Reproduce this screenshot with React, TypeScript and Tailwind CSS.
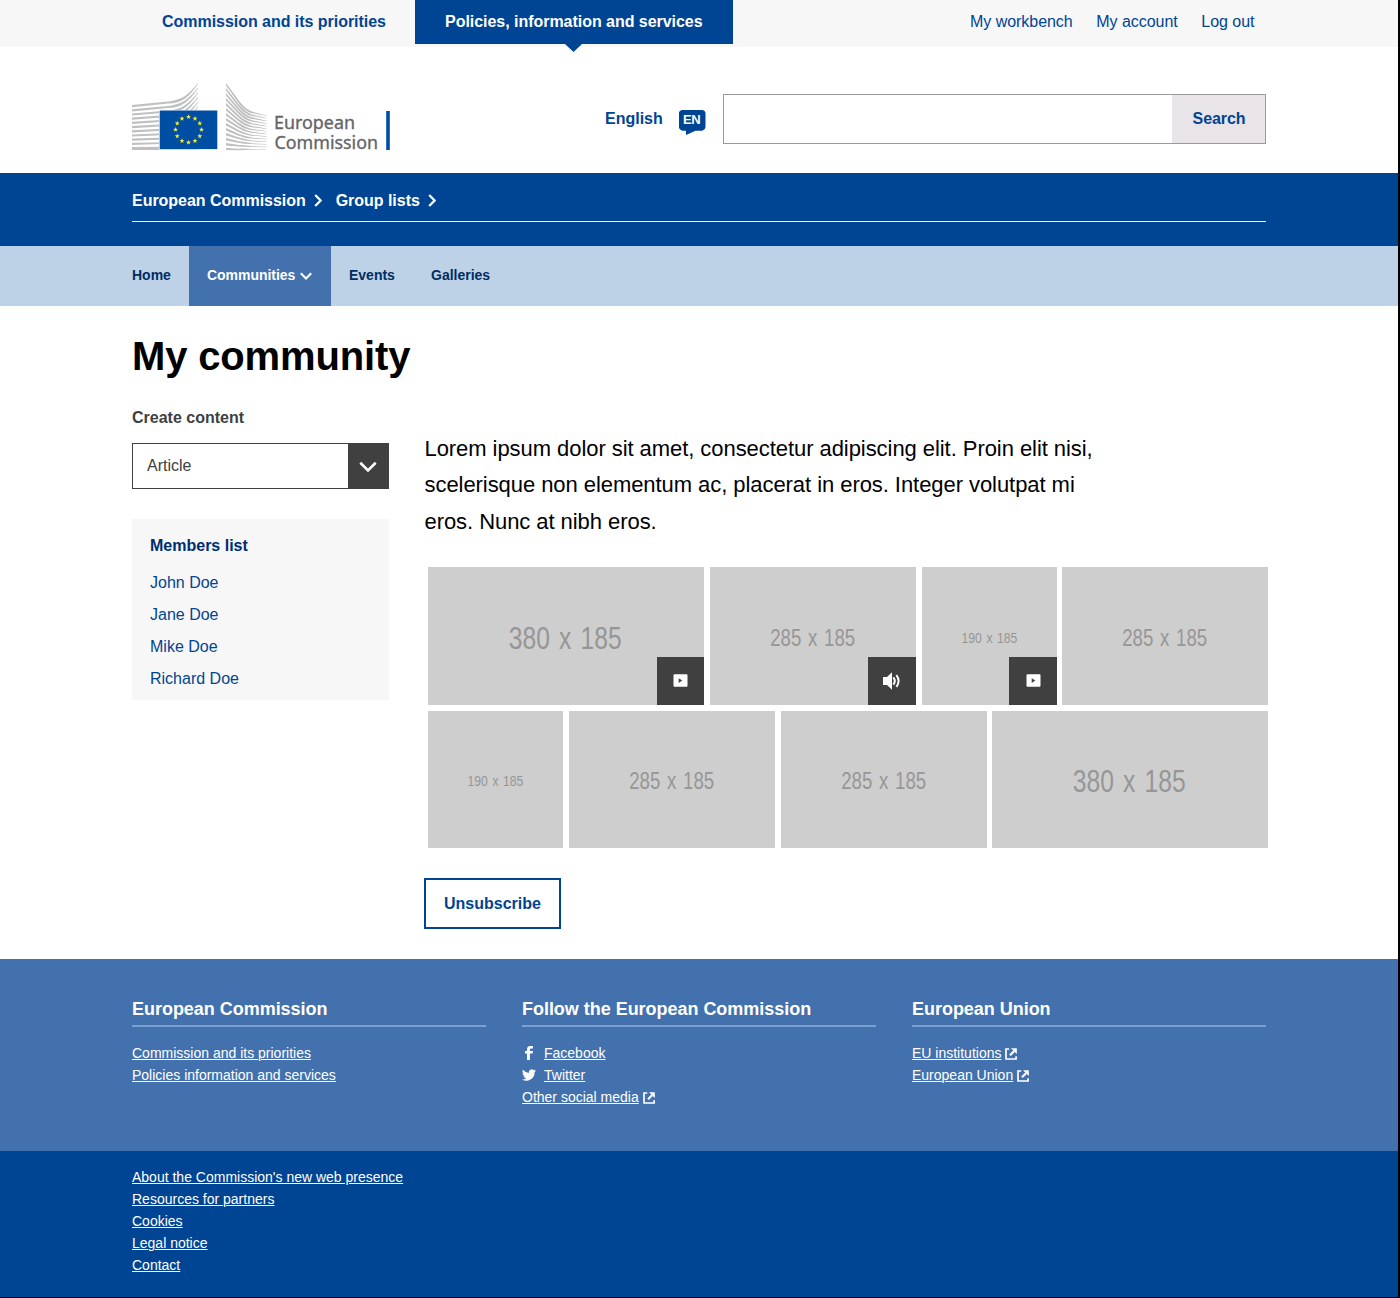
import React from "react";

const starPoints = (cx: number, cy: number, r: number) =>
  Array.from({ length: 10 }, (_, i) => {
    const a = -Math.PI / 2 + (i * Math.PI) / 5;
    const rr = i % 2 ? r * 0.42 : r;
    return `${cx + rr * Math.cos(a)},${cy + rr * Math.sin(a)}`;
  }).join(" ");

function Logo() {
  return (
    <svg width="259" height="68" viewBox="0 0 259 68" className="block shrink-0 overflow-visible" aria-label="European Commission">
      {Array.from({ length: 11 }, (_, i) => {
        const y = 22 + i * 4.2;
        const w = 2.2;
        const k = 1 - i / 11;
        const ty = i * 4.6;
        return (
          <path
            key={i}
            fill="#c0c0c0"
            d={`M0 ${y} L36 ${y - 3.6 * k} C50 ${y - 5 * k} 56 ${ty + 12} 66 ${ty} V${ty + 1} C57 ${ty + 14} 50 ${y - 2.5 * k + 1} 36 ${y - 3 * k + 1.6} L0 ${y + w} Z`}
          />
        );
      })}
      <rect x="0" y="65" width="66" height="2" fill="#c0c0c0" />
      {Array.from({ length: 14 }, (_, i) => {
        const ty = i * 5;
        const my = 27 + i * 3;
        const ey = 32.5 + i * 2.6;
        const k = 1 - i / 14;
        return (
          <path
            key={i}
            fill="#bfbfbf"
            d={`M94 ${ty} L107 ${ty + (my - ty) * 0.66} Q113 ${my - 1} 120 ${my + 1.6 * k} L134.5 ${ey} V${ey + 0.5} L119 ${my + 2.4 * k + 0.6} Q112 ${my + 1} 106 ${ty + (my - ty) * 0.66 + 1.5} L94 ${ty + (i === 13 ? 2 : 2.6)} Z`}
          />
        );
      })}
      <rect x="27" y="27" width="58.8" height="39.6" fill="#fff" />
      <rect x="27.7" y="27.5" width="57.6" height="38.6" fill="#004da4" />
      {Array.from({ length: 12 }, (_, i) => {
        const a = (i * Math.PI) / 6;
        return <polygon key={i} fill="#fbed22" points={starPoints(56.5 + 13 * Math.sin(a), 46.7 - 12.8 * Math.cos(a), 2.6)} />;
      })}
      <g fill="#646567" stroke="#646567" strokeWidth="0.35" fontFamily="'Noto Sans', sans-serif" fontSize="18.5">
        <text x="142" y="46" textLength="81" lengthAdjust="spacingAndGlyphs">European</text>
        <text x="142.5" y="66.3" textLength="103.5" lengthAdjust="spacingAndGlyphs">Commission</text>
      </g>
      <rect x="254.2" y="28" width="3.6" height="39" fill="#004da4" />
    </svg>
  );
}

function Chevron({ className, d, w, h, sw }: { className?: string; d: string; w: number; h: number; sw: number }) {
  return (
    <svg width={w} height={h} viewBox={`0 0 ${w} ${h}`} className={className} fill="none" stroke="currentColor" strokeWidth={sw}>
      <path d={d} />
    </svg>
  );
}

function VideoIcon() {
  return (
    <svg width="15" height="13" viewBox="0 0 15 13" className="-mt-px">
      <path fill="#fff" fillRule="evenodd" d="M1.5 .3h12q1 0 1 1v10.4q0 1-1 1h-12q-1 0-1-1V1.3q0-1 1-1zM5.7 4.3v4.6l3.6-2.3z" />
    </svg>
  );
}

function AudioIcon() {
  return (
    <svg width="18" height="18" viewBox="0 0 18 18" fill="none" stroke="#fff" className="-mt-px">
      <path d="M0 5h4L9 .2v17.6L4 13H0z" fill="#fff" stroke="none" />
      <path d="M10.3 5.4q3 3.6 0 7.2M13.4 3.2q4.4 5.8 0 11.6" strokeWidth="2" />
    </svg>
  );
}

function ExternalIcon() {
  return (
    <svg width="12" height="12" viewBox="0 0 12 12" className="ml-1 mt-[2px]" fill="none" stroke="#fff" strokeWidth="1.7">
      <path d="M4.2 1H1v10h10.1V8.2" />
      <path d="M5 7.2L9 3.2" strokeWidth="2.2" />
      <path d="M6 .2h5.8V6z" fill="#fff" stroke="none" />
    </svg>
  );
}

type TileProps = { kind: "lg" | "md" | "sm"; gap?: string; height: string; media?: "video" | "audio"; badge?: string };
const tileWidth = { lg: "w-[276px]", md: "w-[206px]", sm: "w-[135px]" };
const tileText = {
  lg: "mt-[3px] -ml-[2px] text-[32px] scale-x-[0.77] [word-spacing:3px]",
  md: "mt-[3px] text-[24px] scale-x-[0.777] [word-spacing:2px]",
  sm: "mt-[2px] text-[15px] scale-x-[0.81] [word-spacing:1.5px]",
};
const tileLabel = { lg: "380 x 185", md: "285 x 185", sm: "190 x 185" };

function Tile({ kind, gap = "", height, media, badge = "w-12" }: TileProps) {
  return (
    <div className={`relative flex shrink-0 items-center justify-center bg-[#cecece] ${tileWidth[kind]} ${height} ${gap}`}>
      <span className={`whitespace-nowrap leading-none text-[#969696] ${tileText[kind]}`}>{tileLabel[kind]}</span>
      {media && (
        <span className={`absolute bottom-0 right-0 flex h-12 items-center justify-center bg-[#404040] ${badge}`}>
          {media === "video" ? <VideoIcon /> : <AudioIcon />}
        </span>
      )}
    </div>
  );
}

function FooterColumn({ title, children }: { title: string; children: React.ReactNode }) {
  return (
    <div className="w-[354px]">
      <h2 className="h-[29px] border-b-2 border-[#7b9fd0] text-[18px] font-bold leading-[22px] tracking-[-0.03px]">{title}</h2>
      <ul className="mt-[15px] text-[14px] leading-[22px]">{children}</ul>
    </div>
  );
}

const link = "underline underline-offset-[1px] decoration-1";

export default function App() {
  return (
    <div className="h-[1298px] w-[1400px] overflow-hidden bg-black font-['Liberation_Sans',Arial,sans-serif] text-[16px] text-black">
      <div className="flex h-[1297px] w-[1398px] flex-col bg-white">
        <div className="flex h-[47px] shrink-0 bg-[#f7f7f7] pl-[132px] leading-[43px] tracking-[-0.035px]">
          <a className="w-[283px] pl-[30px] font-bold text-[#004494]">Commission and its priorities</a>
          <a className="relative h-11 w-[318px] bg-[#004494] pl-[30px] font-bold text-white">
            Policies, information and services
            <svg width="17" height="8" viewBox="0 0 17 8" className="absolute left-[150px] top-[44px]">
              <path d="M0 0h17L8.5 8z" fill="#004494" />
            </svg>
          </a>
          <nav className="ml-auto flex gap-[23.6px] pr-[143.5px] text-[#004494]">
            <a>My workbench</a>
            <a>My account</a>
            <a>Log out</a>
          </nav>
        </div>

        <header className="flex h-[126px] shrink-0 px-[132px] pt-9">
          <Logo />
          <div className="ml-[214px] mt-[11px] flex h-[50px]">
            <span className="w-[58px] font-bold leading-[49px] text-[#004494]">English</span>
            <div className="relative ml-4 mt-4 h-[26px] w-[26px]">
              <svg width="27" height="26" viewBox="0 0 27 26" className="absolute left-0 top-0">
                <path fill="#004494" d="M3 0h20.5q3 .5 3 3.5v13q0 3.2-3.5 4.2h-6.5L7 25v-4.3H3.2Q-.3 19.500-.3 16.500V3.500Q0 .5 3 0z" />
              </svg>
              <span className="absolute left-[4px] top-0 text-[13px] font-bold leading-[20px] text-white tracking-[-0.3px]">EN</span>
            </div>
            <div className="ml-[18px] flex w-[543px] border border-[#9a9a9a]">
              <div className="flex-1" />
              <button className="w-[93px] bg-[#e8e4e8] pb-px pl-px font-bold leading-[47px] tracking-[-0.1px] text-[#004494]">Search</button>
            </div>
          </div>
        </header>

        <div className="h-[73px] shrink-0 bg-[#004494] px-[132px] font-bold text-white">
          <div className="flex h-[49px] border-b border-white leading-[55px] tracking-[-0.03px]">
            <span>European Commission</span>
            <Chevron className="ml-2 mt-[21px]" w={8} h={13} sw={2.3} d="M1.2 1L6.6 6.5L1.2 12" />
            <span className="ml-[14px]">Group lists</span>
            <Chevron className="ml-2 mt-[21px]" w={8} h={13} sw={2.3} d="M1.2 1L6.6 6.5L1.2 12" />
          </div>
        </div>

        <nav className="flex h-[60px] shrink-0 bg-[#bdd2e6] pl-[132px] text-[14px] font-bold leading-[58px] text-[#002d62]">
          <a className="w-[57px]">Home</a>
          <a className="flex w-[142px] bg-[#4371ad] pl-[18px] tracking-[-0.04px] text-white">
            Communities
            <Chevron className="ml-[5px] mt-[26px]" w={13} h={9} sw={2} d="M.8 1.2L6 6.5L11.2 1.2" />
          </a>
          <a className="ml-[18px] w-[82px]">Events</a>
          <a>Galleries</a>
        </nav>

        <main className="h-[653px] shrink-0 px-[132px]">
          <h1 className="h-[94px] pt-[26px] text-[40px] font-bold leading-[48px] tracking-[-0.15px]">My community</h1>
          <div className="flex">
            <aside className="w-[257px] shrink-0 text-[#404040]">
              <div className="h-[43px] font-bold leading-[35px]">Create content</div>
              <div className="flex h-[46px] border border-[#404040]">
                <span className="flex-1 pl-[14px] leading-[44px]">Article</span>
                <span className="flex w-10 items-center justify-center bg-[#404040] text-white">
                  <Chevron className="-ml-px mt-px" w={18} h={12} sw={2.6} d="M1.3 1.8L9 9.4L16.7 1.8" />
                </span>
              </div>
              <div className="mt-[30px] h-[181px] bg-[#f7f7f7] pl-[18px] text-[#004494]">
                <h3 className="h-12 font-bold leading-[54px] text-[#002d72]">Members list</h3>
                <ul className="leading-8">
                  <li>John Doe</li>
                  <li>Jane Doe</li>
                  <li>Mike Doe</li>
                  <li>Richard Doe</li>
                </ul>
              </div>
            </aside>
            <section className="ml-[35px] w-[844px] shrink-0">
              <p className="h-[167px] pl-[0.5px] pt-[31px] text-[22px] leading-[36.3px] tracking-[-0.06px]">
                Lorem ipsum dolor sit amet, consectetur adipiscing elit. Proin elit nisi,
                <br />
                scelerisque non elementum ac, placerat in eros. Integer volutpat mi
                <br />
                eros. Nunc at nibh eros.
              </p>
              <div className="flex pl-1">
                <Tile kind="lg" height="h-[138px]" media="video" badge="w-[47px]" />
                <Tile kind="md" height="h-[138px]" gap="ml-1.5" media="audio" />
                <Tile kind="sm" height="h-[138px]" gap="ml-1.5" media="video" />
                <Tile kind="md" height="h-[138px]" gap="ml-[5px]" />
              </div>
              <div className="mt-1.5 flex pl-1">
                <Tile kind="sm" height="h-[137px]" />
                <Tile kind="md" height="h-[137px]" gap="ml-1.5" />
                <Tile kind="md" height="h-[137px]" gap="ml-1.5" />
                <Tile kind="lg" height="h-[137px]" gap="ml-[5px]" />
              </div>
              <button className="mt-[30px] block h-[51px] w-[137px] border-2 border-[#004494] font-bold text-[#004494]">
                Unsubscribe
              </button>
            </section>
          </div>
        </main>

        <footer className="flex-1 bg-[#004494] text-white">
          <div className="flex h-48 gap-9 bg-[#4371ad] pl-[132px] pt-[39px]">
            <FooterColumn title="European Commission">
              <li><a className={link}>Commission and its priorities</a></li>
              <li><a className={link}>Policies information and services</a></li>
            </FooterColumn>
            <FooterColumn title="Follow the European Commission">
              <li className="flex">
                <span className="flex w-[22px] pl-[3px] pt-[4px]">
                  <svg width="8" height="14" viewBox="0 0 8 14">
                    <path fill="#fff" d="M2 14V7.6H0V5h2V3.4Q2 0 5.4 0H8v2.4H6.2Q4.9 2.4 4.9 3.6V5H8l-.4 2.6H4.9V14z" />
                  </svg>
                </span>
                <a className={link}>Facebook</a>
              </li>
              <li className="flex">
                <span className="flex w-[22px] pt-[5px]">
                  <svg width="14" height="12" viewBox="0 2 24 20">
                    <path fill="#fff" d="M24 4.6a10 10 0 0 1-2.8.8 5 5 0 0 0 2.2-2.7 10 10 0 0 1-3.1 1.2 4.9 4.9 0 0 0-8.4 4.5A14 14 0 0 1 1.7 3.1a4.9 4.9 0 0 0 1.5 6.6 4.9 4.9 0 0 1-2.2-.6 4.9 4.9 0 0 0 4 4.9 5 5 0 0 1-2.3.1 4.9 4.9 0 0 0 4.6 3.4A9.9 9.9 0 0 1 0 19.5 14 14 0 0 0 21.5 7.1 10 10 0 0 0 24 4.6z" />
                  </svg>
                </span>
                <a className={link}>Twitter</a>
              </li>
              <li className="flex items-center"><a className={link}>Other social media</a><ExternalIcon /></li>
            </FooterColumn>
            <FooterColumn title="European Union">
              <li className="flex items-center"><a className={link}>EU institutions</a><ExternalIcon /></li>
              <li className="flex items-center"><a className={link}>European Union</a><ExternalIcon /></li>
            </FooterColumn>
          </div>
          <ul className="pl-[132px] pt-[15px] text-[14px] leading-[22px]">
            <li><a className={link}>About the Commission's new web presence</a></li>
            <li><a className={link}>Resources for partners</a></li>
            <li><a className={link}>Cookies</a></li>
            <li><a className={link}>Legal notice</a></li>
            <li><a className={link}>Contact</a></li>
          </ul>
        </footer>
      </div>
    </div>
  );
}
